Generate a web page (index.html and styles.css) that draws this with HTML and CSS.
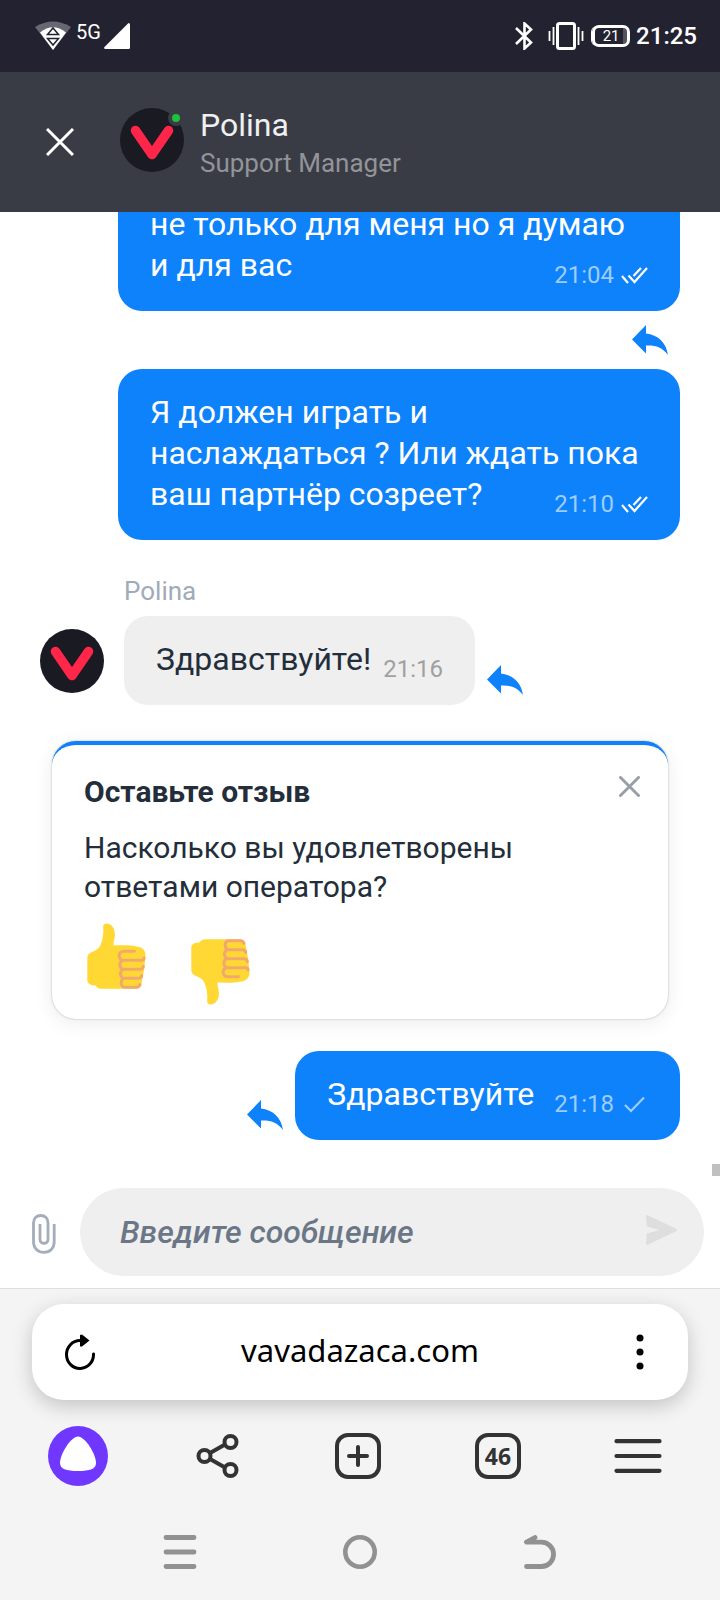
FILE: index.html
```html
<!DOCTYPE html>
<html lang="ru">
<head>
<meta charset="utf-8">
<meta name="viewport" content="width=device-width, initial-scale=1">
<title>Polina – Support Manager</title>
<link rel="stylesheet" href="styles.css">
</head>
<body>
<svg class="defs" aria-hidden="true">
  <symbol id="logo" viewBox="0 0 64 64"><circle cx="32" cy="32" r="32" fill="#191a22"/><path d="M15.500 22.500L32 46.500L48.500 22.500" fill="none" stroke="#ff264a" stroke-width="9.500" stroke-linecap="round" stroke-linejoin="round"/></symbol>
  <symbol id="reply" viewBox="0 0 36 30"><path d="M14 0v8.500C26 10 34 17 36 30C30 22 23 20 14 20.500V28.500L0 14.500z" fill="#0d82fa"/></symbol>
  <symbol id="checks" viewBox="0 0 27 17"><path d="M1 9l6 7M7.500 8.500l6 6.500L26 1M12.500 9l7.500-8" fill="none" stroke="#fff" stroke-width="2.200"/></symbol>
  <symbol id="thumb" viewBox="51 39 178 198">
    <path fill="#ffd833" d="M100 46Q104 39 112 40C128 42 137 60 135 78C134 90 130 98 131 106C160 105 200 105 216 114C228 121 230 134 226 152L223 180L218 208L214 228Q210 237 200 237H92Q82 236 76 227L66 226Q52 222 52 212V142Q53 132 64 127Q84 120 91 107Q99 90 100 70z"/>
    <path fill="none" stroke="#f2a86c" stroke-width="9" stroke-linecap="round" d="M194 124H160Q148 126 148 138Q149 151 162 151H216Q223 150 223 144M162 151Q150 153 150 165Q151 178 162 178H212Q220 177 221 169M162 178Q152 180 152 192Q153 205 163 205H208Q215 204 216 197M163 205Q154 208 154 219Q155 232 165 232H200Q209 231 211 224"/>
  </symbol>
</svg>

<div class="status">
  <svg width="36" height="30" viewBox="0 0 36 30"><path d="M0 6Q18-5 36 6L18 29z" fill="#686773"/><path d="M5 11.500Q18 1 31 11.500L18 29z" fill="#fff"/><path d="M12.500 13.500h11L18 7zM12.500 17.500h11L18 24z" fill="none" stroke="#232230" stroke-width="1.500"/></svg>
  <span class="network">5G</span>
  <svg class="signal" width="26" height="26" viewBox="0 0 26 26"><path d="M24.500 0Q26 0 26 1.500V24.500Q26 26 24.500 26H1Q-.5 25.500 .5 24z" fill="#fff"/></svg>
  <svg class="bluetooth" width="18" height="28" viewBox="0 0 18 28"><path d="M1 6l15 14.500-6.500 6V1.500l6.500 6L1 22" fill="none" stroke="#fff" stroke-width="2.600"/></svg>
  <svg class="vibrate" width="36" height="30" viewBox="0 0 36 30"><rect x="9.500" y="2.500" width="17" height="25" rx="2" fill="none" stroke="#fff" stroke-width="3"/><path d="M1.500 10v10M5.500 6v18M30.500 6v18M34.500 10v10" stroke="#fff" stroke-width="1.800"/></svg>
  <span class="battery">21</span>
  <span class="clock">21:25</span>
</div>

<header class="header">
  <button class="close" aria-label="Закрыть"><svg width="28" height="28" viewBox="0 0 28 28"><path d="M1 1l26 26M27 1L1 27" stroke="#fff" stroke-width="3"/></svg></button>
  <div class="agent-photo"><svg class="avatar"><use href="#logo"/></svg><span class="online"></span></div>
  <div class="agent">
    <h1 class="agent-name">Polina</h1>
    <p class="agent-role">Support Manager</p>
  </div>
</header>

<main class="chat">
  <p class="bubble sent">не только для меня но я думаю и для вас<span class="meta">21:04<svg width="27" height="17"><use href="#checks"/></svg></span></p>
  <button class="reply reply-below" aria-label="Ответить"><svg width="36" height="30"><use href="#reply"/></svg></button>
  <p class="bubble sent">Я должен играть и наслаждаться ? Или ждать пока ваш партнёр созреет?<span class="meta">21:10<svg width="27" height="17"><use href="#checks"/></svg></span></p>
  <p class="sender">Polina</p>
  <div class="row">
    <svg class="avatar"><use href="#logo"/></svg>
    <p class="bubble received">Здравствуйте!<span class="meta">21:16</span></p>
    <button class="reply" aria-label="Ответить"><svg width="36" height="30"><use href="#reply"/></svg></button>
  </div>
  <section class="feedback">
    <div class="feedback-head">
      <h2>Оставьте отзыв</h2>
      <button aria-label="Закрыть отзыв"><svg width="21" height="21" viewBox="0 0 21 21"><path d="M1.500 1.500l18 18M19.500 1.500l-18 18" stroke="#999fa6" stroke-width="3" stroke-linecap="round"/></svg></button>
    </div>
    <p>Насколько вы удовлетворены ответами оператора?</p>
    <div class="votes">
      <button aria-label="Нравится"><svg width="59" height="66"><use href="#thumb"/></svg></button>
      <button class="down" aria-label="Не нравится"><svg width="59" height="66"><use href="#thumb"/></svg></button>
    </div>
  </section>
  <div class="row row-sent">
    <button class="reply" aria-label="Ответить"><svg width="36" height="30"><use href="#reply"/></svg></button>
    <p class="bubble sent">Здравствуйте<span class="meta">21:18<svg width="27" height="17" viewBox="0 0 27 17"><path d="M4 9l6 6L23 1.500" fill="none" stroke="#9ecdfd" stroke-width="2.200"/></svg></span></p>
  </div>
  <span class="scroll-thumb"></span>
</main>

<form class="composer">
  <button class="attach" type="button" aria-label="Прикрепить файл"><svg width="24" height="40" viewBox="0 0 24 40"><path d="M22.200 10V28C22.200 34 18 38.300 12 38.300S1.500 34 1.500 28V9C1.500 4.500 4.500 1.500 8.800 1.500S16 4.500 16 9V25.500C16 30.500 8 30.500 8 25.500V10" fill="none" stroke="#a4adba" stroke-width="2.800"/></svg></button>
  <div class="field">
    <input type="text" aria-label="Сообщение" placeholder="Введите сообщение">
    <button class="send" type="button" aria-label="Отправить"><svg width="32" height="30" viewBox="0 0 32 30"><path d="M2.200.4L30.500 14Q32 15 30.500 16L2.200 29.600Q0 30.500 0 28.500L.8 18.500 13.500 15 .8 11.500 0 1.500Q0-.5 2.200.4z" fill="#dedede"/></svg></button>
  </div>
</form>

<footer class="browser">
  <div class="address">
    <button aria-label="Обновить"><svg width="30" height="36" viewBox="0 0 30 36"><path d="M15 6.500A13.500 14 0 1 0 28.500 20" fill="none" stroke="#000" stroke-width="3" stroke-linecap="round"/><path d="M15 1v11.500h2L24.500 6.500 17 .5z" fill="#000"/></svg></button>
    <button class="url">vavadazaca.com</button>
    <button aria-label="Меню страницы"><svg width="30" height="36" viewBox="0 0 30 36" fill="#000"><circle cx="15" cy="4" r="3.500"/><circle cx="15" cy="18" r="3.500"/><circle cx="15" cy="32" r="3.500"/></svg></button>
  </div>
  <nav class="tools">
    <button aria-label="Алиса"><svg width="60" height="60" viewBox="0 0 60 60"><circle cx="30" cy="30" r="30" fill="#7038ff"/><path d="M30 10.500C37 10.500 48 28 48 37C48 43 42 45 30 45S12 43 12 37C12 28 23 10.500 30 10.500z" fill="#fff"/></svg></button>
    <button aria-label="Поделиться"><svg width="44" height="44" viewBox="0 0 44 44" fill="none" stroke="#333" stroke-width="4"><circle cx="8.500" cy="22" r="6"/><circle cx="34.500" cy="8" r="6"/><circle cx="34.500" cy="36" r="6"/><path d="M14 19l15-8.500M14 25l15 8.500"/></svg></button>
    <button aria-label="Новая вкладка"><span class="tab-box"><svg width="22" height="22" viewBox="0 0 22 22"><path d="M2 11h18M11 2v18" stroke="#333" stroke-width="4" stroke-linecap="round"/></svg></span></button>
    <button aria-label="Вкладки: 46"><span class="tab-box">46</span></button>
    <button aria-label="Меню"><svg width="48" height="34" viewBox="0 0 48 34"><path d="M2.500 2.200h43M2.500 17h43M2.500 31.800h43" stroke="#333" stroke-width="4.200" stroke-linecap="round"/></svg></button>
  </nav>
  <nav class="system">
    <button aria-label="Недавние"><svg width="34" height="34" viewBox="0 0 34 34"><path d="M3 2.500h28M3 17h28M3 31.500h28" stroke="#919191" stroke-width="4.800" stroke-linecap="round"/></svg></button>
    <button aria-label="Домой"><svg width="34" height="34" viewBox="0 0 34 34"><circle cx="17" cy="17" r="14.700" fill="none" stroke="#919191" stroke-width="4.600"/></svg></button>
    <button aria-label="Назад"><svg width="34" height="34" viewBox="0 0 34 34"><path d="M12 2.500L3.500 7.200H18.500A12 12.100 0 0 1 18.500 31.500H3.500" fill="none" stroke="#919191" stroke-width="4.800" stroke-linecap="round" stroke-linejoin="round"/></svg></button>
  </nav>
</footer>
</body>
</html>
```
FILE: styles.css
```css
* {
  box-sizing: border-box;
}

body {
  margin: 0;
  height: 100vh;
  display: flex;
  flex-direction: column;
  background: #fff;
  color: #232e3a;
  font-family: Roboto, "Noto Sans", sans-serif;
}

h1, h2, p {
  margin: 0;
}

svg {
  display: block;
  flex: none;
}

button {
  flex: none;
  padding: 0;
  border: 0;
  background: none;
  color: inherit;
  font: inherit;
  cursor: pointer;
}

.defs {
  position: absolute;
  width: 0;
  height: 0;
}

/* Phone status bar */
.status {
  flex: none;
  display: flex;
  align-items: center;
  height: 72px;
  padding: 0 23px 0 35px;
  background: #232230;
  color: #fff;
}

.network {
  margin: 0 3px 8px 5px;
  font-size: 20px;
  line-height: 28px;
}

.bluetooth {
  margin-left: auto;
}

.vibrate {
  margin: 0 8px 0 15px;
}

.battery {
  width: 38px;
  height: 22px;
  border: 3px solid #fff;
  border-radius: 7px;
  background: linear-gradient(to right, transparent 28px, #54535f 28px);
  box-shadow: -2px 0 0 -1px #fff;
  font-size: 15px;
  line-height: 17px;
  text-align: center;
}

.clock {
  margin-left: 6px;
  font-size: 24px;
  font-weight: 500;
}

/* Conversation header */
.header {
  flex: none;
  display: flex;
  align-items: center;
  height: 140px;
  padding: 0 40px 4px 46px;
  background: #393c45;
}

.close {
  margin-top: 4px;
}

.agent-photo {
  position: relative;
  margin: 0 16px 0 46px;
}

.avatar {
  width: 64px;
  height: 64px;
}

.online {
  position: absolute;
  top: 2px;
  right: 0;
  width: 16px;
  height: 16px;
  border: 4px solid #393c45;
  border-radius: 50%;
  background: #1fc13c;
}

.agent {
  margin-top: 6px;
}

.agent-name {
  color: #f0f0f1;
  font-size: 32px;
  font-weight: 400;
  line-height: 40px;
}

.agent-role {
  color: #929499;
  font-size: 26px;
  line-height: 36px;
}

/* Messages */
.chat {
  position: relative;
  flex: 1;
  min-height: 0;
  display: flex;
  flex-direction: column;
  justify-content: flex-end;
  padding: 0 40px 36px;
  overflow: hidden;
}

.chat > * {
  flex: none;
}

.bubble {
  padding: 23px 32px 25px;
  border-radius: 24px;
  font-size: 32px;
  line-height: 41px;
}

.sent {
  max-width: 562px;
  align-self: flex-end;
  background: #0d82fa;
  color: #fff;
}

.received {
  background: #efefef;
}

.meta {
  float: right;
  display: flex;
  align-items: center;
  gap: 7px;
  margin: 15px 0 -5px 20px;
  font-size: 24px;
  line-height: 31px;
}

.sent .meta {
  color: #9ecdfd;
}

.received .meta {
  margin-left: 12px;
  color: #a0a0a0;
}

.reply-below {
  align-self: flex-end;
  margin: 14px 12px;
}

.sender {
  margin: 36px 84px 10px;
  color: #a0abb9;
  font-size: 26px;
  line-height: 30px;
}

.row {
  display: flex;
  align-items: flex-end;
}

.row .avatar {
  margin: 0 20px 12px 0;
}

.row .reply {
  margin: 0 12px 10px;
}

.row-sent {
  justify-content: flex-end;
}

.feedback {
  margin: 36px 12px 32px;
  padding: 27px 28px 14px 32px;
  border-top: 4px solid #0d82fa;
  border-radius: 24px;
  background: #fff;
  box-shadow: 0 0 2px rgba(0, 0, 0, 0.3), 0 4px 20px rgba(0, 0, 0, 0.08);
  font-size: 30px;
  line-height: 39px;
}

.feedback-head {
  display: flex;
  justify-content: space-between;
  align-items: flex-start;
  margin-bottom: 17px;
}

.feedback h2 {
  font-size: 30px;
  font-weight: 700;
}

.feedback-head button {
  padding-top: 4px;
}

.feedback p {
  max-width: 480px;
}

.votes {
  display: flex;
  gap: 45px;
  height: 82px;
  margin: 17px 3px 0;
}

.votes button {
  align-self: flex-start;
}

.votes .down {
  align-self: flex-end;
}

.down svg {
  transform: scaleY(-1);
}

.scroll-thumb {
  position: absolute;
  right: 0;
  bottom: 0;
  width: 8px;
  height: 12px;
  background: #c0c0c0;
}

/* Message input */
.composer {
  flex: none;
  display: flex;
  align-items: center;
  gap: 24px;
  padding: 12px 16px 12px 32px;
}

.attach {
  margin-top: 4px;
}

.field {
  flex: 1;
  display: flex;
  align-items: center;
  height: 88px;
  padding: 0 26px 0 40px;
  border-radius: 44px;
  background: #efefef;
}

.field input {
  flex: 1;
  min-width: 0;
  height: 42px;
  padding: 0;
  border: 0;
  outline: 0;
  background: none;
  color: #232e3a;
  font: 32px/42px Roboto, "Noto Sans", sans-serif;
}

.field input::placeholder {
  color: #6b7786;
  font-style: italic;
  font-weight: 500;
  opacity: 1;
}

.send {
  margin-bottom: 4px;
}

/* Browser and system bars */
.browser {
  flex: none;
  padding: 15px 0 31px;
  border-top: 1px solid #dedede;
  background: #f4f4f4;
}

.address {
  display: flex;
  align-items: center;
  height: 96px;
  margin: 0 32px;
  padding: 0 33px;
  border-radius: 32px;
  background: #fff;
  box-shadow: 0 6px 20px rgba(0, 0, 0, 0.2);
}

.url {
  flex: 1;
  padding-bottom: 4px;
  color: #000;
  font-family: "Noto Sans", sans-serif;
  font-size: 31px;
  line-height: 42px;
}

.tools,
.system {
  display: grid;
  justify-items: center;
  align-items: center;
}

.tools {
  grid-template-columns: repeat(5, 1fr);
  margin: 26px 12px 49px 8px;
}

.system {
  grid-template-columns: repeat(3, 1fr);
  padding: 0 90px;
}

.tab-box {
  display: flex;
  align-items: center;
  justify-content: center;
  width: 46px;
  height: 46px;
  border: 4px solid #333;
  border-radius: 13px;
  color: #333;
  font: 700 23px/30px "Noto Sans", sans-serif;
}
```
